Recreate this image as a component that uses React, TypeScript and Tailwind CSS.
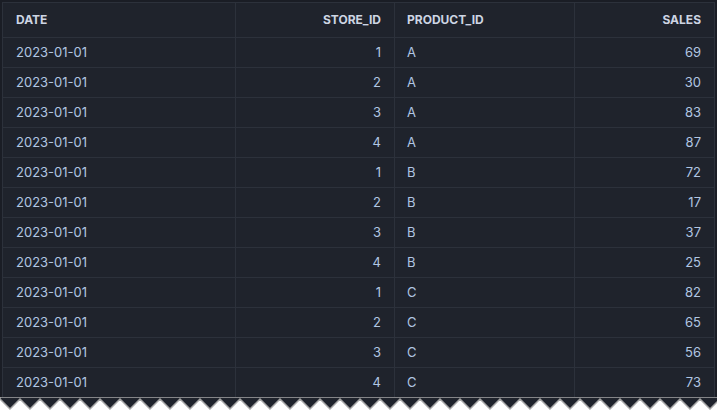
import React from 'react';

const rows: [string, number, string, number][] = [
  ['2023-01-01', 1, 'A', 69],
  ['2023-01-01', 2, 'A', 30],
  ['2023-01-01', 3, 'A', 83],
  ['2023-01-01', 4, 'A', 87],
  ['2023-01-01', 1, 'B', 72],
  ['2023-01-01', 2, 'B', 17],
  ['2023-01-01', 3, 'B', 37],
  ['2023-01-01', 4, 'B', 25],
  ['2023-01-01', 1, 'C', 82],
  ['2023-01-01', 2, 'C', 65],
  ['2023-01-01', 3, 'C', 56],
  ['2023-01-01', 4, 'C', 73],
];

const cols = 'grid grid-cols-[233px_159px_180px_140px]';

const ZigZag: React.FC = () => {
  let pts = '0,0 ';
  for (let x = 0; x <= 740; x += 20) {
    pts += `${x},2 ${x + 10},12 `;
  }
  pts += '740,0';
  return (
    <svg width="717" height="15" className="block">
      <rect width="717" height="15" fill="#ffffff" />
      <polygon points={pts} fill="#1f232c" stroke="#a6a6a6" strokeWidth="1.5" />
    </svg>
  );
};

export default function App() {
  return (
    <div className="w-[717px] h-[412px] overflow-hidden bg-[#1a1d25] pt-[2px] pl-[2px] font-['Inter','Liberation_Sans',sans-serif]">
      <div className="w-[713px] bg-[#1f232c] border-l border-t border-[#2c313b]">
        <div className={`${cols} h-[35px] border-b border-[#2c313b] text-[12px] font-bold text-[#cdd5e3]`}>
          <div className="flex items-center pl-[13px] border-r border-[#2c313b]">DATE</div>
          <div className="flex items-center justify-end pr-[13px] border-r border-[#2c313b]">STORE_ID</div>
          <div className="flex items-center pl-[12px] border-r border-[#2c313b]">PRODUCT_ID</div>
          <div className="flex items-center justify-end pr-[13px] border-r border-[#2c313b]">SALES</div>
        </div>
        {rows.map((r, i) => (
          <div key={i} className={`${cols} h-[30px] border-b border-[#2c313b] text-[13px] text-[#b1c6e2]`}>
            <div className="flex items-center pl-[13px] border-r border-[#2c313b]">{r[0]}</div>
            <div className="flex items-center justify-end pr-[13px] border-r border-[#2c313b]">{r[1]}</div>
            <div className="flex items-center pl-[12px] border-r border-[#2c313b]">{r[2]}</div>
            <div className="flex items-center justify-end pr-[13px] border-r border-[#2c313b]">{r[3]}</div>
          </div>
        ))}
      </div>
      <div className="-ml-[2px] -mt-[1px]">
        <ZigZag />
      </div>
    </div>
  );
}
